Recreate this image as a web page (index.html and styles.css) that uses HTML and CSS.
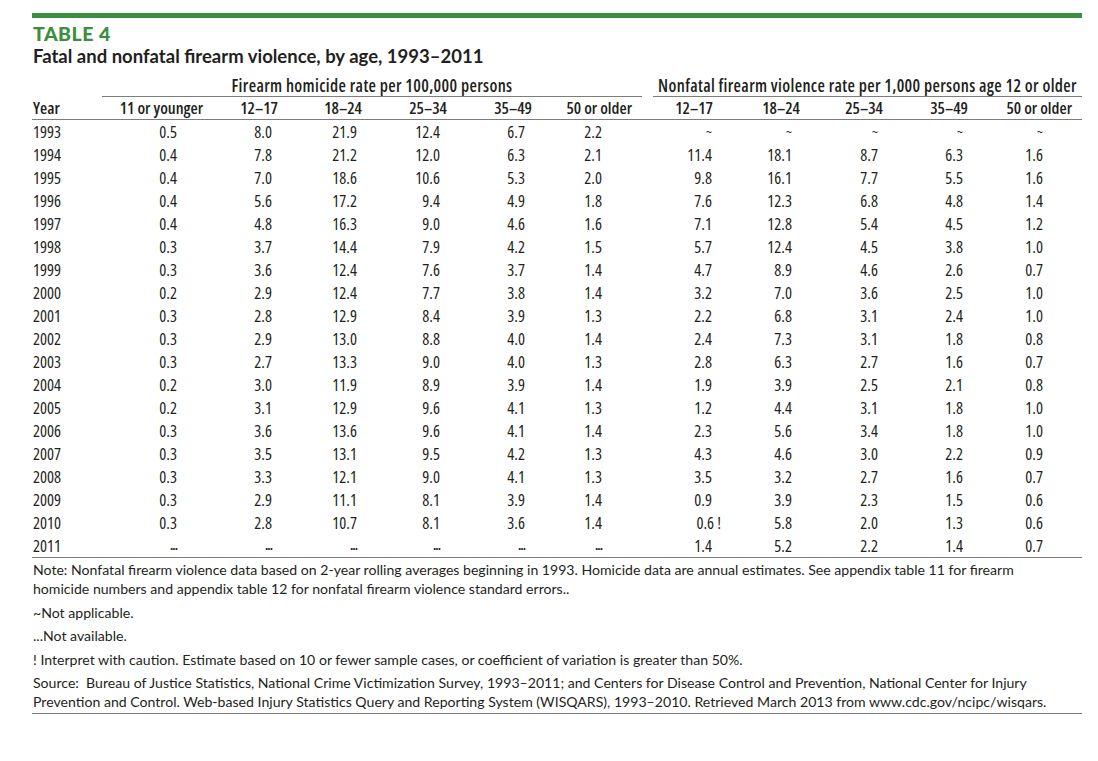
FILE: index.html
```html
<!DOCTYPE html>
<html lang="en">
<head>
<meta charset="utf-8">
<title>Table 4</title>
<link rel="stylesheet" href="styles.css">
</head>
<body>
<div class="page">
  <div class="rule-top"></div>
  <div class="label">TABLE 4</div>
  <h1 class="title">Fatal and nonfatal firearm violence, by age, 1993–2011</h1>
  <table class="data">
    <colgroup>
      <col class="w-year"><col class="w-c1"><col class="w-c2"><col class="w-c3"><col class="w-c4"><col class="w-c5"><col class="w-c6">
      <col class="w-c7"><col class="w-c8"><col class="w-c9"><col class="w-c10"><col class="w-c11">
    </colgroup>
    <thead>
      <tr class="group-row">
        <th></th>
        <th colspan="6" class="group"><div class="group-line g1">Firearm homicide rate per 100,000 persons</div></th>
        <th colspan="5" class="group"><div class="group-line g2">Nonfatal firearm violence rate per 1,000 persons age 12 or older</div></th>
      </tr>
      <tr class="head-row">
        <th class="yr">Year</th>
        <th class="c1">11 or younger</th>
        <th class="c2">12–17</th>
        <th class="c3">18–24</th>
        <th class="c4">25–34</th>
        <th class="c5">35–49</th>
        <th class="c6">50 or older</th>
        <th class="c7">12–17</th>
        <th class="c8">18–24</th>
        <th class="c9">25–34</th>
        <th class="c10">35–49</th>
        <th class="c11">50 or older</th>
      </tr>
    </thead>
    <tbody>
      <tr><td class="yr">1993</td><td class="c1">0.5</td><td class="c2">8.0</td><td class="c3">21.9</td><td class="c4">12.4</td><td class="c5">6.7</td><td class="c6">2.2</td><td class="c7 na">~</td><td class="c8 na">~</td><td class="c9 na">~</td><td class="c10 na">~</td><td class="c11 na">~</td></tr>
      <tr><td class="yr">1994</td><td class="c1">0.4</td><td class="c2">7.8</td><td class="c3">21.2</td><td class="c4">12.0</td><td class="c5">6.3</td><td class="c6">2.1</td><td class="c7">11.4</td><td class="c8">18.1</td><td class="c9">8.7</td><td class="c10">6.3</td><td class="c11">1.6</td></tr>
      <tr><td class="yr">1995</td><td class="c1">0.4</td><td class="c2">7.0</td><td class="c3">18.6</td><td class="c4">10.6</td><td class="c5">5.3</td><td class="c6">2.0</td><td class="c7">9.8</td><td class="c8">16.1</td><td class="c9">7.7</td><td class="c10">5.5</td><td class="c11">1.6</td></tr>
      <tr><td class="yr">1996</td><td class="c1">0.4</td><td class="c2">5.6</td><td class="c3">17.2</td><td class="c4">9.4</td><td class="c5">4.9</td><td class="c6">1.8</td><td class="c7">7.6</td><td class="c8">12.3</td><td class="c9">6.8</td><td class="c10">4.8</td><td class="c11">1.4</td></tr>
      <tr><td class="yr">1997</td><td class="c1">0.4</td><td class="c2">4.8</td><td class="c3">16.3</td><td class="c4">9.0</td><td class="c5">4.6</td><td class="c6">1.6</td><td class="c7">7.1</td><td class="c8">12.8</td><td class="c9">5.4</td><td class="c10">4.5</td><td class="c11">1.2</td></tr>
      <tr><td class="yr">1998</td><td class="c1">0.3</td><td class="c2">3.7</td><td class="c3">14.4</td><td class="c4">7.9</td><td class="c5">4.2</td><td class="c6">1.5</td><td class="c7">5.7</td><td class="c8">12.4</td><td class="c9">4.5</td><td class="c10">3.8</td><td class="c11">1.0</td></tr>
      <tr><td class="yr">1999</td><td class="c1">0.3</td><td class="c2">3.6</td><td class="c3">12.4</td><td class="c4">7.6</td><td class="c5">3.7</td><td class="c6">1.4</td><td class="c7">4.7</td><td class="c8">8.9</td><td class="c9">4.6</td><td class="c10">2.6</td><td class="c11">0.7</td></tr>
      <tr><td class="yr">2000</td><td class="c1">0.2</td><td class="c2">2.9</td><td class="c3">12.4</td><td class="c4">7.7</td><td class="c5">3.8</td><td class="c6">1.4</td><td class="c7">3.2</td><td class="c8">7.0</td><td class="c9">3.6</td><td class="c10">2.5</td><td class="c11">1.0</td></tr>
      <tr><td class="yr">2001</td><td class="c1">0.3</td><td class="c2">2.8</td><td class="c3">12.9</td><td class="c4">8.4</td><td class="c5">3.9</td><td class="c6">1.3</td><td class="c7">2.2</td><td class="c8">6.8</td><td class="c9">3.1</td><td class="c10">2.4</td><td class="c11">1.0</td></tr>
      <tr><td class="yr">2002</td><td class="c1">0.3</td><td class="c2">2.9</td><td class="c3">13.0</td><td class="c4">8.8</td><td class="c5">4.0</td><td class="c6">1.4</td><td class="c7">2.4</td><td class="c8">7.3</td><td class="c9">3.1</td><td class="c10">1.8</td><td class="c11">0.8</td></tr>
      <tr><td class="yr">2003</td><td class="c1">0.3</td><td class="c2">2.7</td><td class="c3">13.3</td><td class="c4">9.0</td><td class="c5">4.0</td><td class="c6">1.3</td><td class="c7">2.8</td><td class="c8">6.3</td><td class="c9">2.7</td><td class="c10">1.6</td><td class="c11">0.7</td></tr>
      <tr><td class="yr">2004</td><td class="c1">0.2</td><td class="c2">3.0</td><td class="c3">11.9</td><td class="c4">8.9</td><td class="c5">3.9</td><td class="c6">1.4</td><td class="c7">1.9</td><td class="c8">3.9</td><td class="c9">2.5</td><td class="c10">2.1</td><td class="c11">0.8</td></tr>
      <tr><td class="yr">2005</td><td class="c1">0.2</td><td class="c2">3.1</td><td class="c3">12.9</td><td class="c4">9.6</td><td class="c5">4.1</td><td class="c6">1.3</td><td class="c7">1.2</td><td class="c8">4.4</td><td class="c9">3.1</td><td class="c10">1.8</td><td class="c11">1.0</td></tr>
      <tr><td class="yr">2006</td><td class="c1">0.3</td><td class="c2">3.6</td><td class="c3">13.6</td><td class="c4">9.6</td><td class="c5">4.1</td><td class="c6">1.4</td><td class="c7">2.3</td><td class="c8">5.6</td><td class="c9">3.4</td><td class="c10">1.8</td><td class="c11">1.0</td></tr>
      <tr><td class="yr">2007</td><td class="c1">0.3</td><td class="c2">3.5</td><td class="c3">13.1</td><td class="c4">9.5</td><td class="c5">4.2</td><td class="c6">1.3</td><td class="c7">4.3</td><td class="c8">4.6</td><td class="c9">3.0</td><td class="c10">2.2</td><td class="c11">0.9</td></tr>
      <tr><td class="yr">2008</td><td class="c1">0.3</td><td class="c2">3.3</td><td class="c3">12.1</td><td class="c4">9.0</td><td class="c5">4.1</td><td class="c6">1.3</td><td class="c7">3.5</td><td class="c8">3.2</td><td class="c9">2.7</td><td class="c10">1.6</td><td class="c11">0.7</td></tr>
      <tr><td class="yr">2009</td><td class="c1">0.3</td><td class="c2">2.9</td><td class="c3">11.1</td><td class="c4">8.1</td><td class="c5">3.9</td><td class="c6">1.4</td><td class="c7">0.9</td><td class="c8">3.9</td><td class="c9">2.3</td><td class="c10">1.5</td><td class="c11">0.6</td></tr>
      <tr><td class="yr">2010</td><td class="c1">0.3</td><td class="c2">2.8</td><td class="c3">10.7</td><td class="c4">8.1</td><td class="c5">3.6</td><td class="c6">1.4</td><td class="c7">0.6<span class="flag">&nbsp;!</span></td><td class="c8">5.8</td><td class="c9">2.0</td><td class="c10">1.3</td><td class="c11">0.6</td></tr>
      <tr class="last"><td class="yr">2011</td><td class="c1 dots">...</td><td class="c2 dots">...</td><td class="c3 dots">...</td><td class="c4 dots">...</td><td class="c5 dots">...</td><td class="c6 dots">...</td><td class="c7">1.4</td><td class="c8">5.2</td><td class="c9">2.2</td><td class="c10">1.4</td><td class="c11">0.7</td></tr>
    </tbody>
  </table>
  <div class="notes">
    <p>Note: Nonfatal firearm violence data based on 2-year rolling averages beginning in 1993. Homicide data are annual estimates. See appendix table 11 for firearm<br>homicide numbers and appendix table 12 for nonfatal firearm violence standard errors..</p>
    <p>~Not applicable.</p>
    <p>...Not available.</p>
    <p>! Interpret with caution. Estimate based on 10 or fewer sample cases, or coefficient of variation is greater than 50%.</p>
    <p>Source:&nbsp; Bureau of Justice Statistics, National Crime Victimization Survey, 1993–2011; and Centers for Disease Control and Prevention, National Center for Injury<br>Prevention and Control. Web-based Injury Statistics Query and Reporting System (WISQARS), 1993–2010. Retrieved March 2013 from www.cdc.gov/ncipc/wisqars.</p>
  </div>
</div>
</body>
</html>
```

FILE: styles.css
```css
html, body {
  margin: 0;
  padding: 0;
  background: #ffffff;
}

body {
  color: #231f20;
  font-family: "Lato", "Liberation Sans", sans-serif;
}

.page {
  width: 1050px;
  padding: 13px 16px 0 32px;
}

.rule-top {
  height: 5px;
  background: #3a8e3e;
}

.label {
  margin-top: 6px;
  font-family: "Lato", "Liberation Sans", sans-serif;
  font-weight: 900;
  font-size: 19.5px;
  line-height: 20px;
  letter-spacing: 0.5px;
  color: #3a8e3e;
  padding-left: 1px;
}

.title {
  margin: 1px 0 0 0;
  font-family: "Lato", "Liberation Sans", sans-serif;
  font-weight: 700;
  font-size: 18.5px;
  line-height: 22px;
  padding-left: 1px;
}

.data {
  margin-top: 8px;
  width: 1050px;
  table-layout: fixed;
  border-collapse: collapse;
  border-spacing: 0;
  font-family: "Liberation Sans Narrow", "Open Sans", "Roboto", sans-serif;
  font-stretch: 75%;
  font-size: 16.5px;
}

.w-year { width: 70px; }
.w-c1 { width: 101px; }
.w-c2 { width: 75px; }
.w-c3 { width: 84px; }
.w-c4 { width: 85px; }
.w-c5 { width: 85px; }
.w-c6 { width: 110px; }
.w-c7 { width: 71px; }
.w-c8 { width: 87px; }
.w-c9 { width: 83px; }
.w-c10 { width: 85px; }
.w-c11 { width: 114px; }

.data th, .data td {
  padding: 0;
  white-space: nowrap;
}

.data th {
  font-weight: 600;
}

.group-row th {
  height: 22px;
  vertical-align: bottom;
}

.group-line {
  border-bottom: 1px solid #7d7d7d;
  text-align: center;
  line-height: 21px;
  font-size: 17px;
  letter-spacing: 0.35px;
}

.group-line.g2 {
  margin-left: 11px;
}

.head-row th {
  height: 22px;
  line-height: 22px;
  text-align: right;
  border-bottom: 1px solid #7d7d7d;
}

.head-row th.yr {
  text-align: left;
  padding-left: 1px;
}

.data td {
  height: 23px;
  line-height: 23px;
  text-align: right;
}

.data td.yr {
  text-align: left;
  padding-left: 1px;
}

.head-row th.c6, .head-row th.c11 { padding-right: 10px; }

td.c1 { padding-right: 26px; }
td.c2 { padding-right: 6px; }
td.c3 { padding-right: 5px; }
td.c4 { padding-right: 7px; }
td.c5 { padding-right: 7px; }
td.c6 { padding-right: 40px; }
td.c7 { padding-right: 1px; }
td.c8 { padding-right: 8px; }
td.c9 { padding-right: 5px; }
td.c10 { padding-right: 5px; }
td.c11 { padding-right: 39px; }

.data td.na {
  font-size: 14px;
}

.data td.dots {
  font-size: 13px;
  font-weight: 700;
  letter-spacing: -1px;
}

.flag {
  margin-right: -9px;
}

.data tr.last td {
  border-bottom: 1px solid #7d7d7d;
}

.notes {
  padding-top: 2px;
  padding-bottom: 2px;
  border-bottom: 1px solid #7d7d7d;
  font-family: "Lato", "Liberation Sans", sans-serif;
  font-size: 14.1px;
  line-height: 19px;
}

.notes p {
  margin: 0 0 4.5px 1px;
}

.notes p:last-child {
  margin-bottom: 0;
}
```
